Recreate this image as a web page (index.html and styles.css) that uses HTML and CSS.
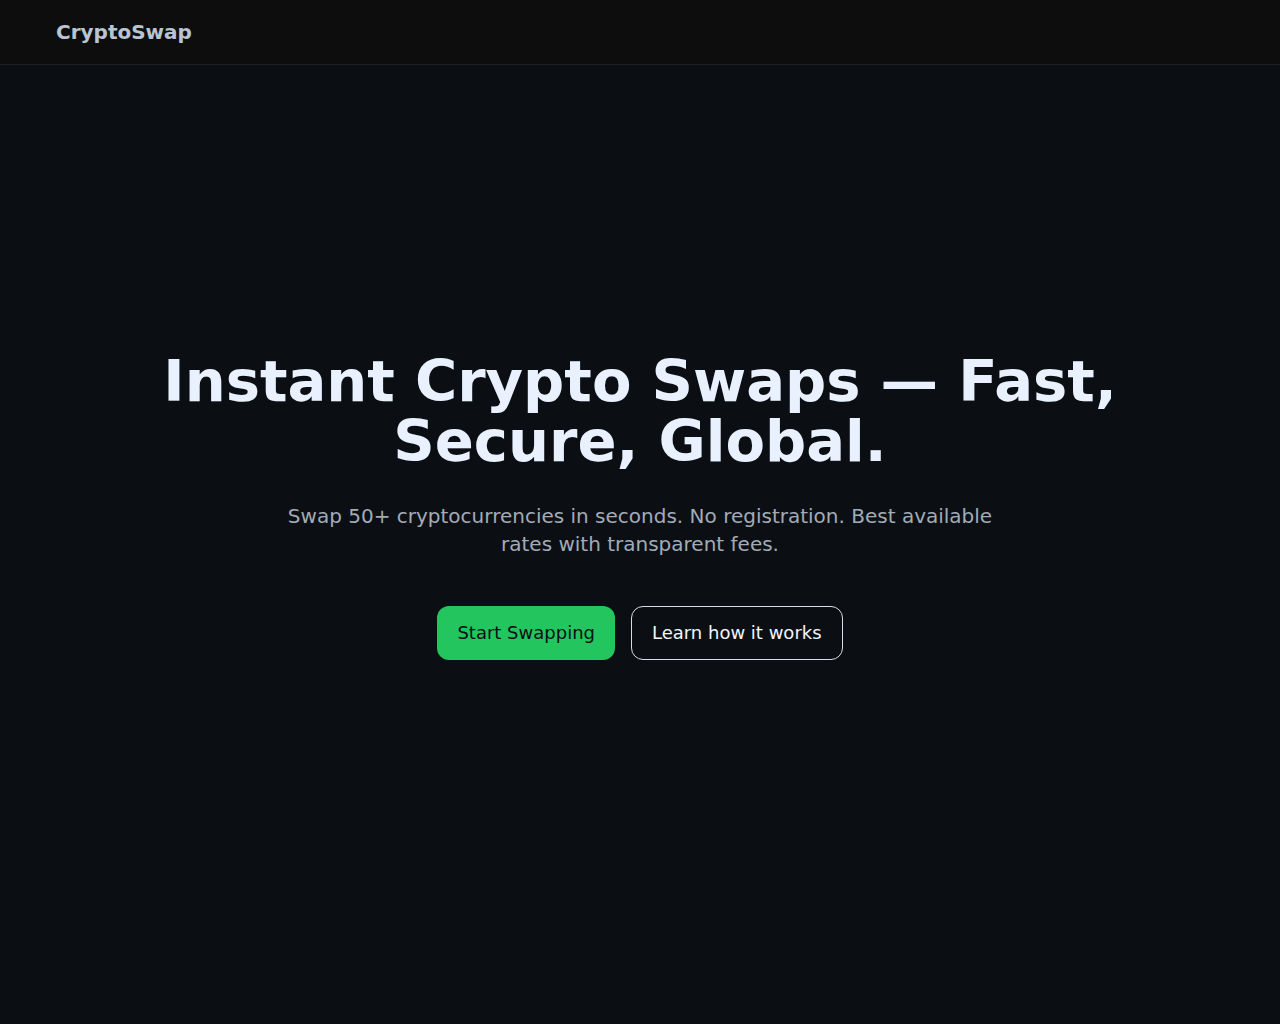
FILE: index.html
```html
<!DOCTYPE html>
<html lang="en">
<head>
  <meta charset="UTF-8" />
  <meta name="viewport" content="width=device-width, initial-scale=1.0"/>
  <title>CryptoSwap</title>
  <link rel="stylesheet" href="styles.css">
</head>
<body>

<header class="topbar">
  <a class="logo" href="#">CryptoSwap</a>
</header>

<main class="hero">
  <div class="hero-inner">
    <h1>Instant Crypto Swaps — Fast, Secure, Global.</h1>
    <p class="lead">Swap 50+ cryptocurrencies in seconds. No registration. Best available rates with transparent fees.</p>
    <div class="actions">
      <a class="btn btn-primary" href="#swap">Start Swapping</a>
      <a class="btn btn-outline" href="#how">Learn how it works</a>
    </div>
  </div>
</main>

</body>
</html>
```

FILE: styles.css
```css
* {
  box-sizing: border-box;
}

html, body {
  height: 100%;
  margin: 0;
  padding: 0;
}

body {
  display: flex;
  flex-direction: column;
  font-family: 'DejaVu Sans', Verdana, sans-serif;
  background: #0b0f14;
  color: #e5edf7;
}

.topbar {
  height: 65px;
  padding: 0 56px;
  display: flex;
  align-items: center;
  background: #0d0d0d;
  border-bottom: 1px solid #1c1f24;
}

.logo {
  font-size: 20px;
  font-weight: bold;
  color: #b9c4d2;
  text-decoration: none;
}

.hero {
  flex: 1;
  display: flex;
  align-items: center;
  justify-content: center;
  padding: 0 24px 77px;
}

.hero-inner {
  text-align: center;
  max-width: 1000px;
}

.hero h1 {
  font-size: 57.6px;
  line-height: 60px;
  margin: 0 0 30px;
  color: #e8f1fd;
}

.lead {
  max-width: 720px;
  margin: 0 auto 48px;
  font-size: 20px;
  line-height: 28px;
  color: #a2abb7;
}

.actions {
  display: flex;
  justify-content: center;
  gap: 16px;
}

.btn {
  display: inline-block;
  font-size: 18px;
  line-height: 26px;
  border-radius: 12px;
  text-decoration: none;
}

.btn-primary {
  padding: 14px 20px;
  background: #22c55e;
  color: #0b0f14;
}

.btn-outline {
  padding: 13px 20px;
  border: 1px solid #d6dde6;
  color: #f3f6fa;
}
```
